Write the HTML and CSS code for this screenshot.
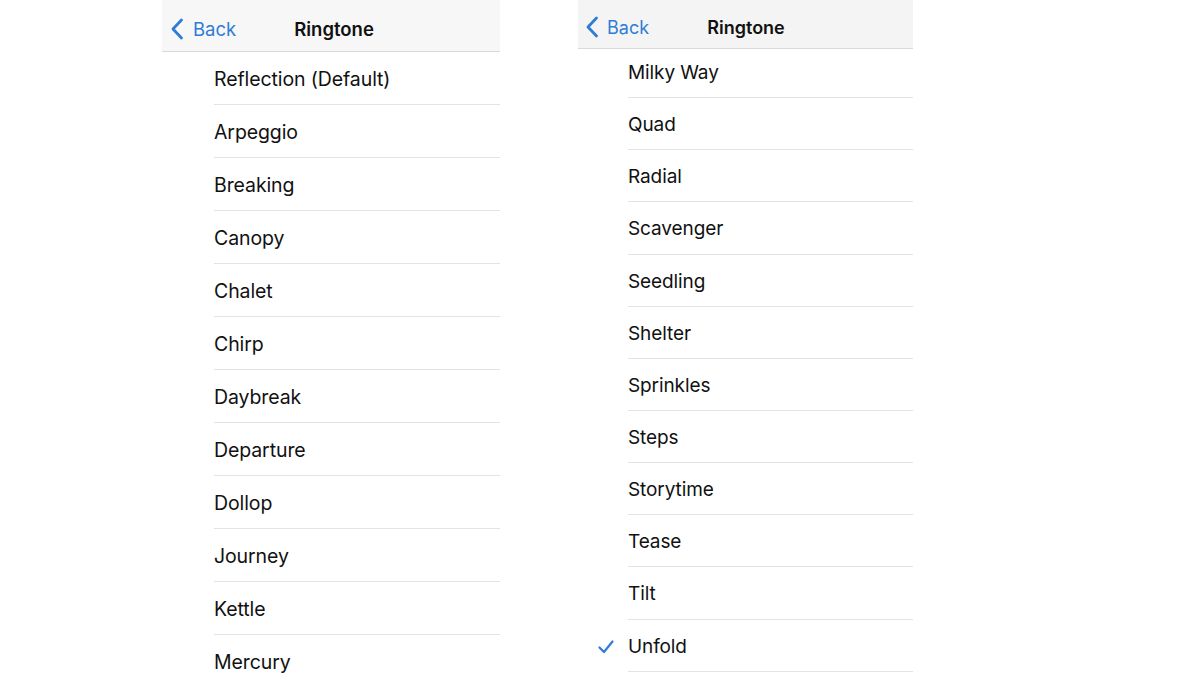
FILE: index.html
```html
<!DOCTYPE html>
<html>
<head>
<meta charset="utf-8">
<link rel="stylesheet" href="styles.css">
</head>
<body>
<div class="stage">
  <section class="panel panel-left">
    <header class="nav">
      <div class="back">
        <svg class="chev" width="14" height="22" viewBox="0 0 14 22"><path d="M11.5 2 L3 11 L11.5 20" fill="none" stroke="currentColor" stroke-width="2.8" stroke-linecap="round" stroke-linejoin="round"/></svg>
        <span>Back</span>
      </div>
      <div class="title">Ringtone</div>
    </header>
    <ul class="list">
      <li class="row"><span class="mark"></span><span class="label">Reflection (Default)</span></li>
      <li class="row"><span class="mark"></span><span class="label">Arpeggio</span></li>
      <li class="row"><span class="mark"></span><span class="label">Breaking</span></li>
      <li class="row"><span class="mark"></span><span class="label">Canopy</span></li>
      <li class="row"><span class="mark"></span><span class="label">Chalet</span></li>
      <li class="row"><span class="mark"></span><span class="label">Chirp</span></li>
      <li class="row"><span class="mark"></span><span class="label">Daybreak</span></li>
      <li class="row"><span class="mark"></span><span class="label">Departure</span></li>
      <li class="row"><span class="mark"></span><span class="label">Dollop</span></li>
      <li class="row"><span class="mark"></span><span class="label">Journey</span></li>
      <li class="row"><span class="mark"></span><span class="label">Kettle</span></li>
      <li class="row"><span class="mark"></span><span class="label">Mercury</span></li>
    </ul>
  </section>
  <section class="panel panel-right">
    <header class="nav">
      <div class="back">
        <svg class="chev" width="14" height="22" viewBox="0 0 14 22"><path d="M11.5 2 L3 11 L11.5 20" fill="none" stroke="currentColor" stroke-width="2.8" stroke-linecap="round" stroke-linejoin="round"/></svg>
        <span>Back</span>
      </div>
      <div class="title">Ringtone</div>
    </header>
    <ul class="list">
      <li class="row"><span class="mark"></span><span class="label">Milky Way</span></li>
      <li class="row"><span class="mark"></span><span class="label">Quad</span></li>
      <li class="row"><span class="mark"></span><span class="label">Radial</span></li>
      <li class="row"><span class="mark"></span><span class="label">Scavenger</span></li>
      <li class="row"><span class="mark"></span><span class="label">Seedling</span></li>
      <li class="row"><span class="mark"></span><span class="label">Shelter</span></li>
      <li class="row"><span class="mark"></span><span class="label">Sprinkles</span></li>
      <li class="row"><span class="mark"></span><span class="label">Steps</span></li>
      <li class="row"><span class="mark"></span><span class="label">Storytime</span></li>
      <li class="row"><span class="mark"></span><span class="label">Tease</span></li>
      <li class="row"><span class="mark"></span><span class="label">Tilt</span></li>
      <li class="row"><span class="mark"><svg width="16" height="14" viewBox="0 0 16 14"><path d="M1.5 7.5 L6 12 L14.5 1.5" fill="none" stroke="currentColor" stroke-width="2.2" stroke-linecap="round" stroke-linejoin="round"/></svg></span><span class="label">Unfold</span></li>
    </ul>
  </section>
</div>
</body>
</html>
```
FILE: styles.css
```css
* { box-sizing: border-box; }
html, body {
  margin: 0;
  padding: 0;
  background: #ffffff;
  width: 1200px;
  height: 675px;
  overflow: hidden;
}
body {
  font-family: Inter, "Liberation Sans", Arial, sans-serif;
  color: #111111;
}
.stage {
  display: flex;
  align-items: flex-start;
  padding-left: 162px;
  gap: 78px;
}
.panel {
  display: flex;
  flex-direction: column;
}
.panel-left { width: 338px; }
.panel-right { width: 335px; }

.nav {
  position: relative;
  z-index: 1;
  display: flex;
  align-items: center;
  background: #f7f7f8;
  border-bottom: 1px solid #d9d9d9;
}
.panel-left .nav { height: 52px; padding-left: 8px; padding-top: 7px; }
.panel-right .nav { height: 49px; padding-left: 7px; padding-top: 6px; background: #f4f4f4; }

.back {
  display: flex;
  align-items: center;
  gap: 9px;
  color: #2f7cd6;
  font-size: 18.5px;
}
.panel-right .back { font-size: 18px; gap: 8px; }
.chev { display: block; }

.title {
  position: absolute;
  left: 0;
  right: 0;
  top: 7px;
  bottom: 0;
  display: flex;
  align-items: center;
  justify-content: center;
  font-weight: 600;
  font-size: 18.5px;
  color: #111;
  pointer-events: none;
}
.panel-left .title { padding-left: 6px; }
.panel-right .title { top: 6px; padding-left: 1px; font-size: 18px; }

.list {
  list-style: none;
  margin: 0;
  padding: 0;
}
.panel-right .list { margin-top: -3px; }
.row {
  display: flex;
  align-items: stretch;
}
.mark {
  width: 52px;
  flex: none;
  display: flex;
  align-items: center;
  padding-left: 20px;
  color: #2f7cd6;
}
.panel-right .mark { width: 50px; padding-top: 2px; }
.label {
  flex: 1;
  display: flex;
  align-items: center;
  border-bottom: 1px solid #e3e3e3;
  font-size: 19.5px;
  letter-spacing: -0.1px;
}
.panel-left .label { height: 53px; padding-top: 2px; }
.panel-right .label { height: 52.15px; font-size: 19px; padding-top: 2px; }
```
